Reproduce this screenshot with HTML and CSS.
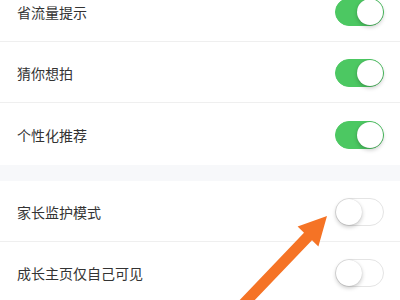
FILE: index.html
```html
<!DOCTYPE html>
<html lang="zh">
<head>
<meta charset="utf-8">
<link rel="stylesheet" href="styles.css">
</head>
<body>
<div class="page">
  <div class="group first">
    <div class="row"><span class="label">省流量提示</span><span class="switch on"><span class="knob"></span></span></div>
    <div class="row"><span class="label">猜你想拍</span><span class="switch on"><span class="knob"></span></span></div>
    <div class="row last"><span class="label">个性化推荐</span><span class="switch on"><span class="knob"></span></span></div>
  </div>
  <div class="gap"></div>
  <div class="group">
    <div class="row"><span class="label">家长监护模式</span><span class="switch"><span class="knob"></span></span></div>
    <div class="row"><span class="label">成长主页仅自己可见</span><span class="switch"><span class="knob"></span></span></div>
  </div>
  <svg class="arrow" width="400" height="300" viewBox="0 0 400 300">
    <polygon fill="#f57325" points="327,216 318.4,246.5 312,240.3 241.6,313.8 233.7,306.3 304,232.7 297.6,226.5"/>
  </svg>
</div>
</body>
</html>
```
FILE: styles.css
```css
html, body {
  margin: 0;
  padding: 0;
  background: #ffffff;
}
body {
  width: 400px;
  height: 300px;
  overflow: hidden;
  font-family: "Noto Sans CJK SC", "Noto Sans", sans-serif;
}
.page {
  position: relative;
  width: 400px;
  height: 300px;
  overflow: hidden;
}
.group.first {
  margin-top: -19px;
}
.row {
  display: flex;
  align-items: center;
  justify-content: space-between;
  height: 60px;
  padding: 0 16px 0 17px;
  border-bottom: 1px solid #efefef;
  background: #fff;
}
.group.first .row.last {
  height: 62px;
  border-bottom: none;
}
.label {
  font-size: 14px;
  color: #333333;
  line-height: 20px;
  padding-top: 1px;
}
.gap {
  height: 16px;
  background: #f7f8fa;
}
.switch {
  position: relative;
  box-sizing: border-box;
  width: 49px;
  height: 28px;
  border-radius: 14px;
  background: #ffffff;
  border: 1px solid #e4e4e4;
  margin-top: 2px;
}
.switch.on {
  background: #4cc862;
  border-color: #4cc862;
}
.knob {
  position: absolute;
  top: 0;
  left: 0;
  width: 26px;
  height: 26px;
  border-radius: 50%;
  background: #ffffff;
  box-shadow: 0 2px 4px rgba(0, 0, 0, 0.22), 0 0 1px rgba(0, 0, 0, 0.2);
}
.switch.on .knob {
  left: 21px;
}
.arrow {
  position: absolute;
  left: 0;
  top: 0;
}
```
